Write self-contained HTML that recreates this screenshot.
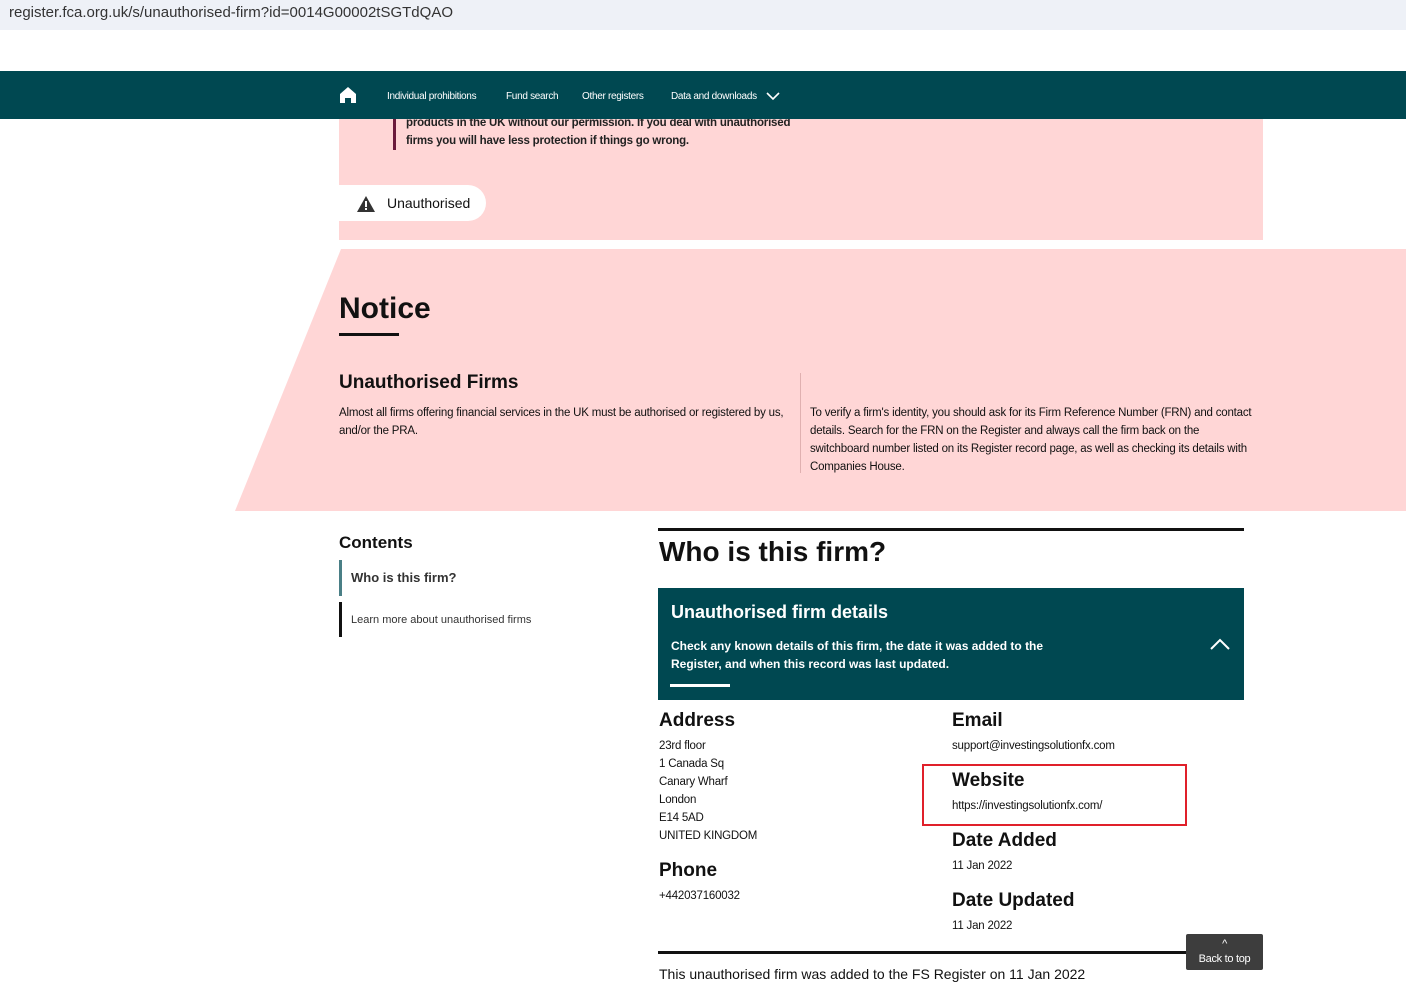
<!DOCTYPE html><html><head><style>
*{margin:0;padding:0;box-sizing:border-box}
body{width:1406px;height:976px;overflow:hidden;background:#fff;font-family:"Liberation Sans",sans-serif;color:#111;position:relative}
.a{position:absolute}
.url{top:0;left:0;width:1406px;height:30px;background:#eef1f7;font-size:15px;color:#333;padding:4px 9px}
.nav{top:71px;left:0;width:1406px;height:48px;background:#004851;color:#fff;font-size:10px;letter-spacing:-0.3px}
.h{font-weight:bold}
.s{font-size:11.5px;line-height:18px;letter-spacing:-0.2px}
</style></head><body>
<div class="a url">register.fca.org.uk/s/unauthorised-firm?id=0014G00002tSGTdQAO</div>
<div class="a" style="top:119px;left:339px;width:924px;height:121px;background:#ffd6d6"></div>
<div class="a s" style="top:114px;left:393px;width:410px;border-left:3px solid #6b1a3c;padding-left:10px;font-weight:bold;color:#222">products in the UK without our permission. If you deal with unauthorised firms you will have less protection if things go wrong.</div>
<div class="a nav">
<svg class="a" style="left:339px;top:15px" width="18" height="18" viewBox="0 0 18 18"><path d="M1 8L9 1l8 7v9h-5v-5H6v5H1z" fill="#fff"/></svg>
<span class="a" style="left:387px;top:20px">Individual prohibitions</span>
<span class="a" style="left:506px;top:20px">Fund search</span>
<span class="a" style="left:582px;top:20px">Other registers</span>
<span class="a" style="left:671px;top:20px">Data and downloads</span>
<svg class="a" style="left:766px;top:20px" width="14" height="10"><path d="M1 2l6 6 6-6" stroke="#fff" stroke-width="1.6" fill="none"/></svg>
</div>
<div class="a" style="top:185px;left:339px;width:147px;height:36px;background:#fff;border-radius:0 18px 18px 0;font-size:14px;padding:10px 0 0 48px">Unauthorised</div>
<svg class="a" style="left:357px;top:196px" width="18" height="16"><path d="M9 0L18 16H0z" fill="#333"/><rect x="8" y="5" width="2" height="6" fill="#fff"/><rect x="8" y="12" width="2" height="2" fill="#fff"/></svg>
<svg class="a" style="left:0;top:249px" width="1406" height="262"><polygon points="235,262 341,0 1406,0 1406,262" fill="#ffd6d6"/></svg>
<div class="a h" style="top:292px;left:339px;font-size:30px">Notice</div>
<div class="a" style="top:333px;left:339px;width:60px;height:3px;background:#111"></div>
<div class="a h" style="top:372px;left:339px;font-size:19px">Unauthorised Firms</div>
<div class="a s" style="top:404px;left:339px;width:445px">Almost all firms offering financial services in the UK must be authorised or registered by us, and/or the PRA.</div>
<div class="a" style="top:373px;left:800px;width:1px;height:100px;background:#e0b0b0"></div>
<div class="a s" style="top:404px;left:810px;width:450px">To verify a firm's identity, you should ask for its Firm Reference Number (FRN) and contact details. Search for the FRN on the Register and always call the firm back on the switchboard number listed on its Register record page, as well as checking its details with Companies House.</div>
<div class="a h" style="top:533px;left:339px;font-size:17px">Contents</div>
<div class="a h" style="top:560px;left:339px;height:36px;border-left:3px solid #4a7f86;padding:10px 0 0 9px;font-size:13px;color:#333">Who is this firm?</div>
<div class="a" style="top:602px;left:339px;height:35px;border-left:3px solid #111;padding:12px 0 0 9px;font-size:11px;color:#333">Learn more about unauthorised firms</div>
<div class="a" style="top:528px;left:658px;width:586px;height:3px;background:#111"></div>
<div class="a h" style="top:536px;left:659px;font-size:28px">Who is this firm?</div>
<div class="a" style="top:588px;left:658px;width:586px;height:112px;background:#004851;color:#fff">
<div class="a h" style="top:14px;left:13px;font-size:18px">Unauthorised firm details</div>
<div class="a h" style="top:49px;left:13px;font-size:12px;line-height:18px;width:420px">Check any known details of this firm, the date it was added to the Register, and when this record was last updated.</div>
<div class="a" style="top:96px;left:12px;width:60px;height:3px;background:#fff"></div>
<svg class="a" style="left:552px;top:50px" width="20" height="12"><path d="M1 11l9-9 9 9" stroke="#fff" stroke-width="2" fill="none"/></svg>
</div>
<div class="a h" style="top:710px;left:659px;font-size:19px">Address</div>
<div class="a s" style="top:737px;left:659px">23rd floor<br>1 Canada Sq<br>Canary Wharf<br>London<br>E14 5AD<br>UNITED KINGDOM</div>
<div class="a h" style="top:860px;left:659px;font-size:19px">Phone</div>
<div class="a s" style="top:887px;left:659px">+442037160032</div>
<div class="a h" style="top:710px;left:952px;font-size:19px">Email</div>
<div class="a s" style="top:737px;left:952px">support@investingsolutionfx.com</div>
<div class="a" style="top:764px;left:922px;width:265px;height:62px;border:2px solid #e0202a"></div>
<div class="a h" style="top:770px;left:952px;font-size:19px">Website</div>
<div class="a s" style="top:797px;left:952px">https://investingsolutionfx.com/</div>
<div class="a h" style="top:830px;left:952px;font-size:19px">Date Added</div>
<div class="a s" style="top:857px;left:952px">11 Jan 2022</div>
<div class="a h" style="top:890px;left:952px;font-size:19px">Date Updated</div>
<div class="a s" style="top:917px;left:952px">11 Jan 2022</div>
<div class="a" style="top:951px;left:658px;width:586px;height:3px;background:#111"></div>
<div class="a" style="top:966px;left:659px;font-size:14px">This unauthorised firm was added to the FS Register on 11 Jan 2022</div>
<div class="a" style="top:934px;left:1186px;width:77px;height:36px;background:#3d3d3d;color:#fff;font-size:11px;text-align:center;border-radius:2px;padding-top:3px;line-height:15px;letter-spacing:-0.3px">^<br>Back to top</div>
</body></html>
